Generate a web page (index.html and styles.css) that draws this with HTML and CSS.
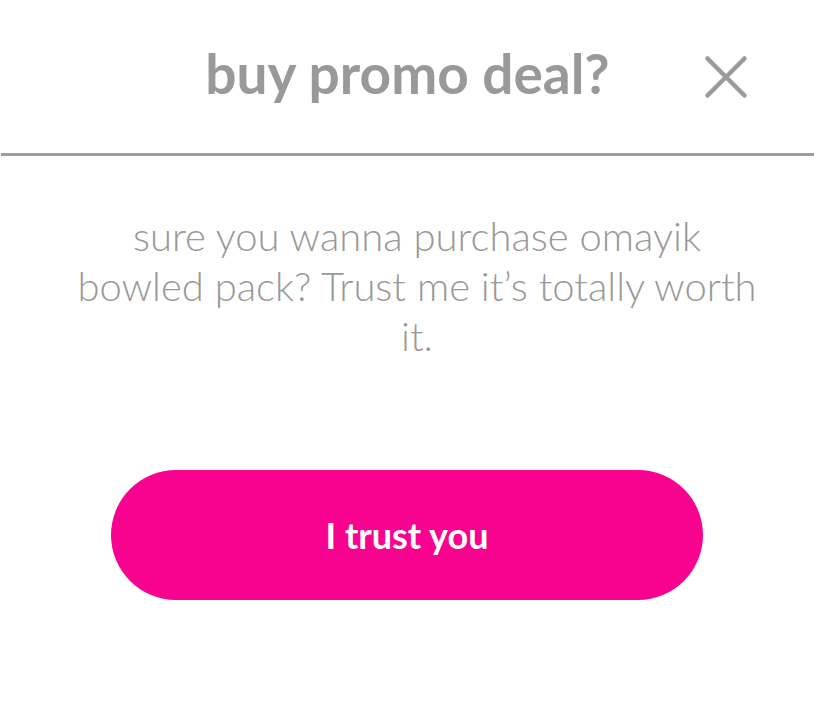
FILE: index.html
```html
<!DOCTYPE html>
<html>
<head>
<meta charset="utf-8">
<link rel="stylesheet" href="styles.css">
</head>
<body>
<div class="dialog">
  <header class="header">
    <span></span>
    <h1 class="title">buy promo deal?</h1>
    <button class="close" aria-label="close">
      <svg width="44" height="44" viewBox="0 0 44 44"><path d="M3.5 3.5L40.5 40.5M40.5 3.5L3.5 40.5" stroke="#9a9a9a" stroke-width="4.5" stroke-linecap="round" fill="none"/></svg>
    </button>
  </header>
  <p class="message">sure you wanna purchase omayik bowled pack? Trust me it’s totally worth it.</p>
  <div class="actions">
    <button class="primary">I trust you</button>
  </div>
</div>
</body>
</html>
```
FILE: styles.css
```css
html, body {
  margin: 0;
  padding: 0;
  background: #fff;
}
body {
  font-family: Lato, "Noto Sans", sans-serif;
  width: 814px;
  height: 716px;
  overflow: hidden;
}
.dialog {
  display: flex;
  flex-direction: column;
}
.header {
  height: 153px;
  display: grid;
  grid-template-columns: 1fr auto 1fr;
  align-items: center;
  border-bottom: 3px solid #9e9e9e;
  margin-left: 1px;
}
.title {
  margin: 0;
  font-size: 55px;
  font-weight: 700;
  color: #999;
  padding-bottom: 8px;
}
.close {
  justify-self: end;
  margin-right: 66px;
  background: none;
  border: 0;
  padding: 0;
  width: 44px;
  height: 44px;
  display: flex;
}
.message {
  margin: 55px 57px 0 77px;
  text-align: center;
  font-size: 40px;
  font-weight: 300;
  line-height: 50px;
  color: #999;
}
.actions {
  display: flex;
  justify-content: center;
  margin-top: 109px;
}
.primary {
  width: 592px;
  height: 130px;
  border-radius: 65px;
  border: 0;
  background: #f8038f;
  color: #fff;
  font-family: Lato, "Noto Sans", sans-serif;
  font-size: 36px;
  font-weight: 700;
  padding: 0;
}
```
